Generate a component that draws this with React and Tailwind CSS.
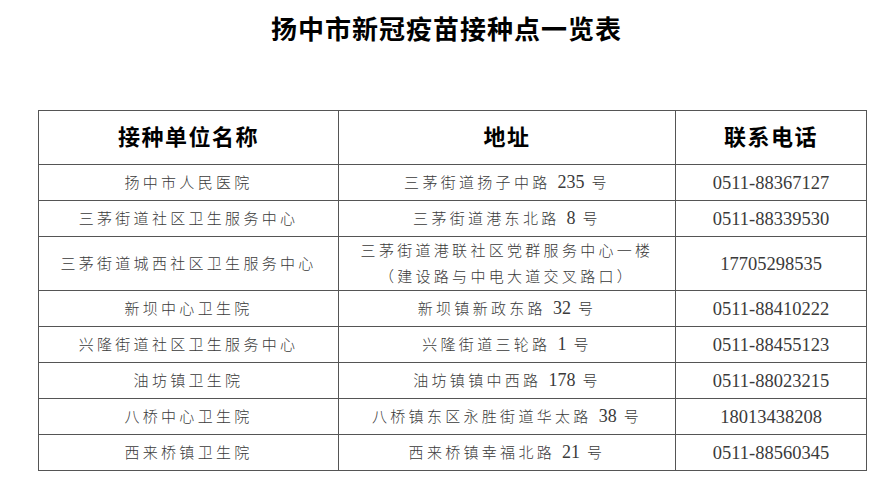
const ROWS = [
  ['扬中市人民医院', ['三茅街道扬子中路 235 号'], '0511-88367127'],
  ['三茅街道社区卫生服务中心', ['三茅街道港东北路 8 号'], '0511-88339530'],
  ['三茅街道城西社区卫生服务中心', ['三茅街道港联社区党群服务中心一楼', '（建设路与中电大道交叉路口）'], '17705298535'],
  ['新坝中心卫生院', ['新坝镇新政东路 32 号'], '0511-88410222'],
  ['兴隆街道社区卫生服务中心', ['兴隆街道三轮路 1 号'], '0511-88455123'],
  ['油坊镇卫生院', ['油坊镇镇中西路 178 号'], '0511-88023215'],
  ['八桥中心卫生院', ['八桥镇东区永胜街道华太路 38 号'], '18013438208'],
  ['西来桥镇卫生院', ['西来桥镇幸福北路 21 号'], '0511-88560345'],
];

// digits use the serif face without the wide CJK spacing
function Txt({ s }) {
  return s.split(/(\d[\d-]*)/).map((p, i) =>
    /\d/.test(p) ? <span key={i} className="tracking-normal text-[18px]">{p}</span> : p
  );
}

export default function App() {
  const font = { fontFamily: '"Liberation Serif", "Noto Sans CJK SC", serif' };
  return (
    <div className="w-[893px] h-[496px] bg-white overflow-hidden" style={font}>
      <div className="h-[62px] flex items-center justify-center">
        <h1 className="text-[26px] font-bold text-black tracking-[1px] leading-none">扬中市新冠疫苗接种点一览表</h1>
      </div>
      <div className="pt-[48px] pl-[38px]">
        <table className="table-fixed w-[828px] border-collapse border border-[#555]">
          <colgroup>
            <col className="w-[300px]" />
            <col className="w-[337px]" />
            <col className="w-[191px]" />
          </colgroup>
          <thead>
            <tr className="h-[54px]">
              {['接种单位名称', '地址', '联系电话'].map(h => (
                <th key={h} className="border border-[#555] text-center text-[22px] font-bold text-black tracking-[1.5px] leading-none">{h}</th>
              ))}
            </tr>
          </thead>
          <tbody>
            {ROWS.map(([name, addr, tel]) => (
              <tr key={name} className={addr.length > 1 ? 'h-[54px]' : 'h-[36px]'}>
                <td className="border border-[#555] text-center text-[15px] font-light text-[#3a3a3a] tracking-[3.3px] leading-[26px] p-0">{name}</td>
                <td className="border border-[#555] text-center text-[15px] font-light text-[#3a3a3a] tracking-[3.3px] leading-[26px] p-0">
                  {addr.map(a => <div key={a}><Txt s={a} /></div>)}
                </td>
                <td className="border border-[#555] text-center text-[18.5px] text-[#3a3a3a] leading-[26px] p-0">{tel}</td>
              </tr>
            ))}
          </tbody>
        </table>
      </div>
    </div>
  );
}
